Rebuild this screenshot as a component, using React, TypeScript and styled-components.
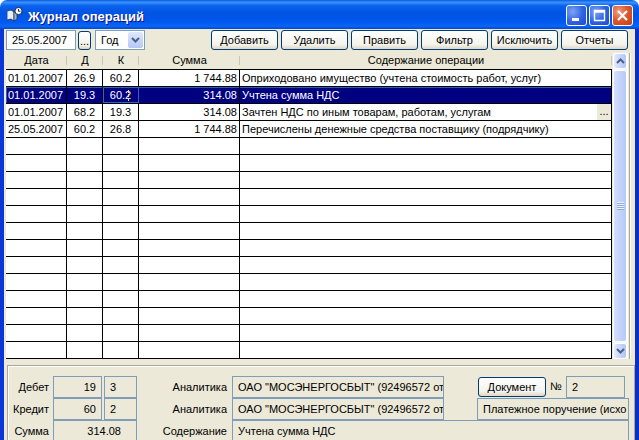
import React from 'react'
import styled, { createGlobalStyle } from 'styled-components'

const GlobalStyle = createGlobalStyle`
	html, body {
		margin: 0;
		padding: 0;
		background: #fff;
		overflow: hidden;
	}
	* {
		box-sizing: border-box;
	}
`

const Win = styled.div`
	width: 639px;
	height: 440px;
	overflow: hidden;
	display: flex;
	flex-direction: column;
	font-family: 'Liberation Sans', Arial, sans-serif;
	font-size: 11px;
	color: #000;
`
const TitleBar = styled.div`
	height: 29px;
	flex: none;
	display: flex;
	align-items: center;
	padding: 0 6px 0 7px;
	border-radius: 7px 7px 0 0;
	background: linear-gradient(
		180deg,
		#0a5bd8 0%,
		#3a93ff 8%,
		#0a62ee 20%,
		#0054e3 45%,
		#0058ee 75%,
		#0a66f5 90%,
		#0048d0 100%
	);
`
const TitleText = styled.span`
	margin: 3px 0 0 5px;
	font-size: 13px;
	font-weight: bold;
	color: #fff;
	text-shadow: 1px 1px 0 #0f1089;
	flex: 1;
`
const CaptionButtons = styled.div`
	display: flex;
	gap: 2px;
	margin-top: 1px;
`
const CaptionButton = styled.div<{ $close?: boolean }>`
	width: 21px;
	height: 21px;
	border: 1px solid #fff;
	border-radius: 3px;
	display: flex;
	align-items: center;
	justify-content: center;
	background: ${(p) =>
		p.$close
			? 'radial-gradient(circle at 30% 30%, #f0a088 0%, #dd5a30 45%, #c23a14 100%)'
			: 'radial-gradient(circle at 30% 30%, #7fa4f4 0%, #2f62e0 55%, #1f4ad0 100%)'};
`
const Body = styled.div`
	flex: 1;
	min-height: 0;
	display: flex;
	flex-direction: column;
	background: #ece9d8;
	border-left: 4px solid #0a38d8;
	border-right: 4px solid #0a2fc8;
`
const Toolbar = styled.div`
	height: 24px;
	flex: none;
	display: flex;
	align-items: flex-start;
	padding: 1px 7px 0 2px;
`
const DateInput = styled.div`
	width: 70px;
	height: 20px;
	background: #fff;
	border: 1px solid #7f9db9;
	padding-left: 5px;
	line-height: 18px;
`
const DotsButton = styled.div`
	width: 13px;
	height: 19px;
	margin: 1px 4px 0 2px;
	border: 1px solid #003c74;
	border-radius: 3px;
	background: linear-gradient(180deg, #fff 0%, #f0efe6 80%, #d8d4c4 100%);
	text-align: center;
	line-height: 19px;
`
const YearSelect = styled.div`
	width: 50px;
	height: 20px;
	background: #fff;
	border: 1px solid #7f9db9;
	display: flex;
	align-items: center;
	justify-content: space-between;
	padding: 1px 1px 1px 5px;
`
const SelectArrow = styled.div`
	width: 15px;
	height: 16px;
	border-radius: 2px;
	background: linear-gradient(180deg, #dfe8fd 0%, #b3c8f5 100%);
	display: flex;
	align-items: center;
	justify-content: center;
`
const ActionButtons = styled.div`
	margin-left: auto;
	display: flex;
	gap: 3px;
`
const ActionButton = styled.div`
	width: 67px;
	height: 20px;
	border: 1px solid #003c74;
	border-radius: 3px;
	background: linear-gradient(180deg, #fff 0%, #f4f3ec 75%, #dcd8c8 100%);
	text-align: center;
	line-height: 19px;
`
const GridArea = styled.div`
	height: 306px;
	flex: none;
	display: flex;
	padding-left: 2px;
`
const Table = styled.div`
	width: 606px;
	display: flex;
	flex-direction: column;
`
const columns = '61px 36px 36px 101px 1fr'
const HeaderRow = styled.div`
	height: 16px;
	flex: none;
	display: grid;
	grid-template-columns: ${columns};
`
const HeaderCell = styled.div`
	position: relative;
	text-align: center;
	line-height: 15px;
	&::after {
		content: '';
		position: absolute;
		right: 0;
		top: 3px;
		bottom: 4px;
		width: 1px;
		background: #c9c6b4;
	}
`
const Rows = styled.div`
	flex: 1;
	background: #fff;
	border-top: 1px solid #000;
	border-right: 1px solid #000;
`
const Row = styled.div<{ $selected?: boolean }>`
	height: 17px;
	display: grid;
	grid-template-columns: ${columns};
	border-bottom: 1px solid #000;
	background: ${(p) => (p.$selected ? '#000080' : '#fff')};
	color: ${(p) => (p.$selected ? '#fff' : '#000')};
	box-shadow: ${(p) => (p.$selected ? 'inset 0 1px 0 #2a62b0, inset 1px 0 0 #2a62b0' : 'none')};
`
const Cell = styled.div<{ $align?: string; $focus?: boolean }>`
	position: relative;
	display: flex;
	min-width: 0;
	border-right: 1px solid #000;
	line-height: 16px;
	white-space: nowrap;
	padding: 0 2px;
	justify-content: ${(p) => p.$align || 'flex-start'};
	${(p) => (p.$focus ? 'outline: 1px solid #2a6ab8; outline-offset: -1px;' : '')}
	&:last-child {
		border-right: none;
	}
`
const CellText = styled.span`
	flex: 1;
`
const Caret = styled.i`
	position: absolute;
	right: 9px;
	top: 3px;
	height: 11px;
	border-left: 1px dashed #ffe94a;
`
const RowDots = styled.div`
	width: 14px;
	margin: 0 -2px 0 0;
	background: #ece9d8;
	text-align: center;
	line-height: 15px;
	flex: none;
`
const ScrollBar = styled.div`
	width: 15px;
	margin-left: 1px;
	display: flex;
	flex-direction: column;
	background: #f3f6fd;
	border-right: 1px solid #fff;
`
const ScrollButton = styled.div`
	height: 16px;
	flex: none;
	border: 1px solid #fff;
	border-radius: 3px;
	background: linear-gradient(90deg, #e2ebfe 0%, #c3d3fb 60%, #b0c4f6 100%);
	display: flex;
	align-items: center;
	justify-content: center;
`
const ScrollThumb = styled.div`
	flex: 1;
	margin: 1px 0;
	border: 1px solid #fff;
	border-radius: 3px;
	background: linear-gradient(90deg, #d2dffc 0%, #c4d3fb 50%, #b6c9f8 100%);
	display: flex;
	align-items: center;
	justify-content: center;
`
const Grip = styled.div`
	width: 7px;
	height: 8px;
	background: repeating-linear-gradient(180deg, #eef3fe 0 1px, #8fa8e8 1px 2px);
`
const Frame = styled.div`
	width: 2px;
	background: #aca899;
	border-right: 1px solid #fff;
	margin-left: 1px;
`
const Panel = styled.div`
	margin: 6px 0 0 3px;
	flex: 1;
	border: 1px solid #aca899;
	border-bottom: none;
	box-shadow: inset 1px 1px 0 #fff;
	padding: 10px 0 0 0;
	display: grid;
	grid-template-columns: 45px 49px 2px 33px 95px 212px 33px 69px 20px 59px 4px;
	grid-template-rows: 22px 22px 22px;
`
const Label = styled.div<{ $col: number }>`
	grid-column: ${(p) => p.$col};
	text-align: right;
	padding-right: ${(p) => (p.$col === 1 ? 4 : 5)}px;
	line-height: 22px;
	white-space: nowrap;
`
const Field = styled.div<{ $from: number; $to: number; $right?: boolean; $inset?: number }>`
	grid-column: ${(p) => p.$from} / ${(p) => p.$to};
	border: 1px solid #7f9db9;
	overflow: hidden;
	white-space: nowrap;
	line-height: 20px;
	padding: 0 ${(p) => p.$inset ?? 5}px 0 5px;
	text-align: ${(p) => (p.$right ? 'right' : 'left')};
`
const DocButton = styled(ActionButton)`
	grid-column: 8;
	width: 68px;
	margin: 1px 0 0 1px;
`
const NumberLabel = styled.div`
	grid-column: 9;
	text-align: center;
	line-height: 20px;
`

const TitleIcon = () => (
	<svg width="16" height="15" viewBox="0 0 16 15">
		<path d="M0 4l4-1 3 2v9l-3-2-4 1z" fill="#e8eef8" stroke="#26324a" strokeWidth="0.8" />
		<path d="M7 5l3-1v8l-3 2z" fill="#9db4dc" stroke="#26324a" strokeWidth="0.8" />
		<circle cx="11.5" cy="4" r="3.6" fill="#fff" stroke="#1a2a50" />
		<path d="M11.5 2v2.2h2" fill="none" stroke="#1a2a50" />
	</svg>
)

const Chevron = ({ up }: { up?: boolean }) => (
	<svg width="9" height="6" viewBox="0 0 9 6">
		<path
			d={up ? 'M1 5l3.5-3.5L8 5' : 'M1 1l3.5 3.5L8 1'}
			fill="none"
			stroke="#4d6185"
			strokeWidth="2"
		/>
	</svg>
)

const rows = [
	['01.01.2007', '26.9', '60.2', '1 744.88', 'Оприходовано имущество (учтена стоимость работ, услуг)'],
	['01.01.2007', '19.3', '60.2', '314.08', 'Учтена сумма НДС'],
	['01.01.2007', '68.2', '19.3', '314.08', 'Зачтен НДС по иным товарам, работам, услугам'],
	['25.05.2007', '60.2', '26.8', '1 744.88', 'Перечислены денежные средства поставщику (подрядчику)'],
]
const emptyRows = Array.from({ length: 13 }, (_, i) => i)
const buttons = ['Добавить', 'Удалить', 'Править', 'Фильтр', 'Исключить', 'Отчеты']
const headers = ['Дата', 'Д', 'К', 'Сумма', 'Содержание операции']
const analytics = 'ОАО "МОСЭНЕРГОСБЫТ" (92496572 от'

export default function App() {
	return (
		<Win>
			<GlobalStyle />
			<TitleBar>
				<TitleIcon />
				<TitleText>Журнал операций</TitleText>
				<CaptionButtons>
					<CaptionButton>
						<svg width="13" height="13" viewBox="0 0 13 13">
							<rect x="2" y="9" width="7" height="3" fill="#fff" />
						</svg>
					</CaptionButton>
					<CaptionButton>
						<svg width="13" height="13" viewBox="0 0 13 13">
							<path d="M1.5 1.5h10v10h-10zM1.5 3h10" fill="none" stroke="#fff" strokeWidth="1.4" />
						</svg>
					</CaptionButton>
					<CaptionButton $close>
						<svg width="13" height="13" viewBox="0 0 13 13">
							<path d="M2 2l9 9M11 2l-9 9" stroke="#fff" strokeWidth="2.2" />
						</svg>
					</CaptionButton>
				</CaptionButtons>
			</TitleBar>
			<Body>
				<Toolbar>
					<DateInput>25.05.2007</DateInput>
					<DotsButton>...</DotsButton>
					<YearSelect>
						Год
						<SelectArrow>
							<Chevron />
						</SelectArrow>
					</YearSelect>
					<ActionButtons>
						{buttons.map((b) => (
							<ActionButton key={b}>{b}</ActionButton>
						))}
					</ActionButtons>
				</Toolbar>
				<GridArea>
					<Table>
						<HeaderRow>
							{headers.map((h) => (
								<HeaderCell key={h}>{h}</HeaderCell>
							))}
						</HeaderRow>
						<Rows>
							{rows.map((r, i) => (
								<Row key={i} $selected={i === 1}>
									<Cell>{r[0]}</Cell>
									<Cell $align="center">{r[1]}</Cell>
									<Cell $align="center" $focus={i === 1}>
										{r[2]}
										{i === 1 && <Caret />}
									</Cell>
									<Cell $align="flex-end">{r[3]}</Cell>
									<Cell>
										<CellText>{r[4]}</CellText>
										{i === 2 && <RowDots>...</RowDots>}
									</Cell>
								</Row>
							))}
							{emptyRows.map((i) => (
								<Row key={i}>
									<Cell />
									<Cell />
									<Cell />
									<Cell />
									<Cell />
								</Row>
							))}
						</Rows>
					</Table>
					<ScrollBar>
						<ScrollButton>
							<Chevron up />
						</ScrollButton>
						<ScrollThumb>
							<Grip />
						</ScrollThumb>
						<ScrollButton>
							<Chevron />
						</ScrollButton>
					</ScrollBar>
					<Frame />
				</GridArea>
				<Panel>
					<Label $col={1}>Дебет</Label>
					<Field $from={2} $to={3} $right>19</Field>
					<Field $from={4} $to={5}>3</Field>
					<Label $col={5}>Аналитика</Label>
					<Field $from={6} $to={7}>{analytics}</Field>
					<DocButton>Документ</DocButton>
					<NumberLabel>№</NumberLabel>
					<Field $from={10} $to={11}>2</Field>

					<Label $col={1}>Кредит</Label>
					<Field $from={2} $to={3} $right>60</Field>
					<Field $from={4} $to={5}>2</Field>
					<Label $col={5}>Аналитика</Label>
					<Field $from={6} $to={7}>{analytics}</Field>
					<Field $from={8} $to={12}>Платежное поручение (исхо</Field>

					<Label $col={1}>Сумма</Label>
					<Field $from={2} $to={5} $right $inset={15}>314.08</Field>
					<Label $col={5}>Содержание</Label>
					<Field $from={6} $to={12}>Учтена сумма НДС</Field>
				</Panel>
			</Body>
		</Win>
	)
}
